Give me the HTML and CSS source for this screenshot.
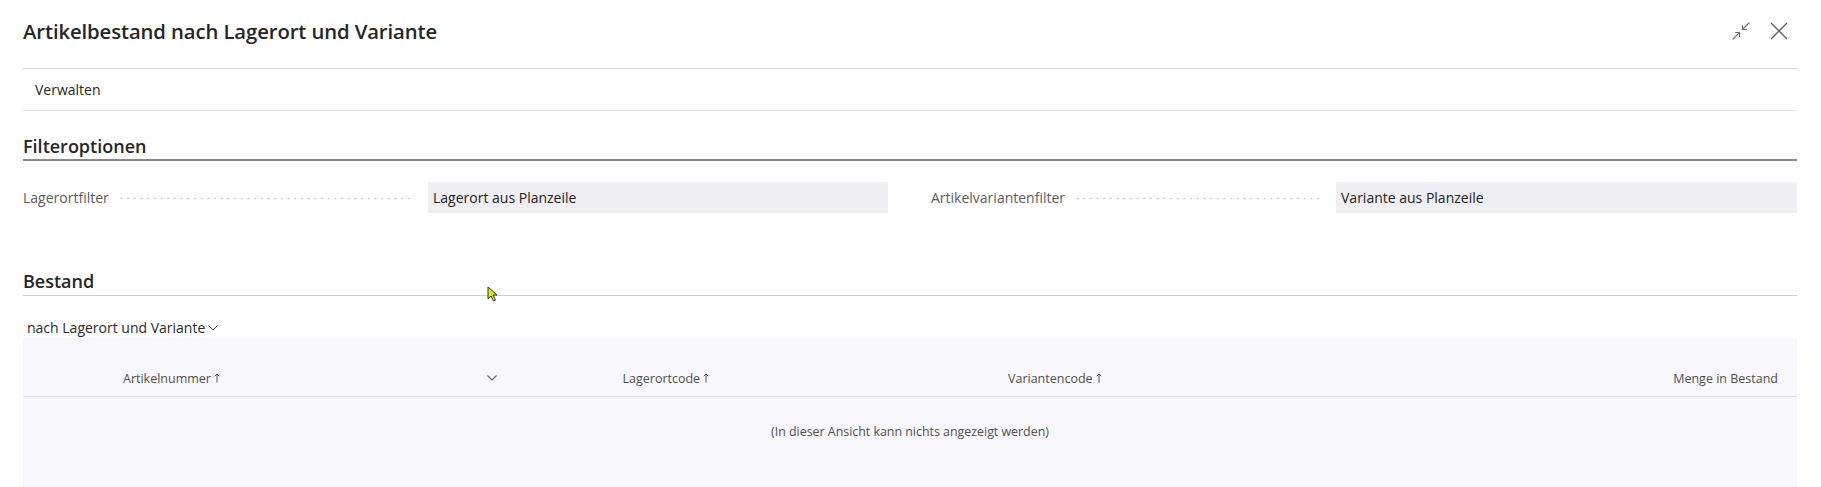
FILE: index.html
```html
<!DOCTYPE html>
<html lang="de">
<head>
<meta charset="utf-8">
<title>Artikelbestand nach Lagerort und Variante</title>
<link rel="stylesheet" href="styles.css">
</head>
<body>
<div class="page">
  <header class="header">
    <h1 class="title">Artikelbestand nach Lagerort und Variante</h1>
    <div class="window-actions">
      <button class="icon-btn" aria-label="Verkleinern">
        <svg width="18" height="18" viewBox="0 0 18 18" fill="none" stroke="#6b6b6b" stroke-width="1.1" stroke-linecap="round">
          <path d="M17 1 L10.5 7.5"/>
          <path d="M10.5 3.5 V7.5 H14.5"/>
          <path d="M1 17 L7.5 10.5"/>
          <path d="M3.5 10.5 H7.5 V14.5"/>
        </svg>
      </button>
      <button class="icon-btn" aria-label="Schließen">
        <svg width="18" height="18" viewBox="0 0 18 18" fill="none" stroke="#5f5f5f" stroke-width="1.3" stroke-linecap="round">
          <path d="M1.5 1.5 L16.5 16.5"/>
          <path d="M16.5 1.5 L1.5 16.5"/>
        </svg>
      </button>
    </div>
  </header>

  <nav class="actionbar">
    <span class="action">Verwalten</span>
  </nav>

  <section class="group">
    <h2 class="group-title group-title-strong">Filteroptionen</h2>
    <div class="filters">
      <div class="field">
        <div class="field-label"><span class="label-text">Lagerortfilter</span><span class="leader"></span></div>
        <div class="field-value">Lagerort aus Planzeile</div>
      </div>
      <div class="field">
        <div class="field-label"><span class="label-text">Artikelvariantenfilter</span><span class="leader"></span></div>
        <div class="field-value">Variante aus Planzeile</div>
      </div>
    </div>
  </section>

  <section class="group group-stock">
    <h2 class="group-title group-title-light">Bestand</h2>
    <div class="view-select">nach Lagerort und Variante
      <svg class="chev-small" width="10" height="6" viewBox="0 0 10 6" fill="none" stroke="#505050" stroke-width="1"><path d="M0.5 0.5 L5 5 L9.5 0.5"/></svg>
    </div>
    <div class="table">
      <div class="thead">
        <div class="th-spacer"></div>
        <div class="th th-art"><span>Artikelnummer <svg class="sort" width="6" height="10" viewBox="0 0 6 10" fill="none" stroke="#505050" stroke-width="1"><path d="M3 9.5 V1"/><path d="M0.8 3.2 L3 1 L5.2 3.2"/></svg></span>
          <svg class="col-menu" width="10" height="6" viewBox="0 0 10 6" fill="none" stroke="#606060" stroke-width="1.1"><path d="M0.5 0.5 L5 5 L9.5 0.5"/></svg>
        </div>
        <div class="th-spacer"></div>
        <div class="th">Lagerortcode <svg class="sort" width="6" height="10" viewBox="0 0 6 10" fill="none" stroke="#505050" stroke-width="1"><path d="M3 9.5 V1"/><path d="M0.8 3.2 L3 1 L5.2 3.2"/></svg></div>
        <div class="th">Variantencode <svg class="sort" width="6" height="10" viewBox="0 0 6 10" fill="none" stroke="#505050" stroke-width="1"><path d="M3 9.5 V1"/><path d="M0.8 3.2 L3 1 L5.2 3.2"/></svg></div>
        <div class="th th-right">Menge in Bestand</div>
      </div>
      <div class="tbody">
        <div class="empty">(In dieser Ansicht kann nichts angezeigt werden)</div>
      </div>
    </div>
  </section>

  <svg class="cursor" width="12" height="16" viewBox="0 0 12 16"><path d="M1 1 L1 13 L4 10 L6.5 15 L8.5 14 L6 9 L10 9 Z" fill="#d7e81a" stroke="#222" stroke-width="0.9" stroke-linejoin="round"/></svg>
</div>
</body>
</html>
```

FILE: styles.css
```css
* { box-sizing: border-box; }
html, body { margin: 0; padding: 0; background: #ffffff; }
body {
  font-family: "Open Sans", "Noto Sans", "Liberation Sans", sans-serif;
  color: #212121;
  height: 487px;
  overflow: hidden;
}
.page {
  position: relative;
  padding: 0 24px 0 23px;
}
.header {
  display: flex;
  align-items: center;
  justify-content: space-between;
  height: 69px;
  padding-bottom: 7px;
  border-bottom: 1px solid #d6d6d6;
}
.title {
  margin: 0;
  font-size: 20.3px;
  font-weight: 600;
  letter-spacing: -0.1px;
  color: #262626;
}
.window-actions {
  display: flex;
  gap: 20px;
  margin-right: 9px;
  margin-top: 1px;
}
.icon-btn {
  border: 0;
  background: none;
  padding: 0;
  width: 18px;
  height: 18px;
  display: flex;
}
.actionbar {
  height: 42px;
  display: flex;
  align-items: center;
  padding-left: 12px;
  border-bottom: 1px solid #e1e1e1;
}
.action {
  font-size: 14px;
  color: #262626;
}
.group-title {
  margin: 0;
  font-size: 18px;
  font-weight: 600;
  line-height: 26px;
  color: #262626;
}
.group-title-strong {
  margin-top: 22px;
  padding-bottom: 0;
  border-bottom: 2px solid #8a8a8a;
}
.filters {
  display: grid;
  grid-template-columns: 865px 1fr;
  gap: 43px;
  margin-top: 21px;
}
.field {
  display: grid;
  grid-template-columns: 405px 1fr;
  align-items: center;
}
.field-label {
  display: flex;
  align-items: center;
  padding-right: 13px;
  font-size: 14px;
  color: #5c5c5c;
}
.leader {
  flex: 1;
  height: 3px;
  margin-left: 9px;
  margin-top: 2px;
  background-image: radial-gradient(circle, #c4c4c4 0.8px, transparent 1.1px);
  background-size: 6.7px 3px;
  background-repeat: repeat-x;
}
.field-value {
  height: 31px;
  line-height: 31px;
  padding-left: 5px;
  background: #efeef2;
  font-size: 14px;
  color: #222;
}
.group-stock {
  margin-top: 55px;
}
.group-title-light {
  padding-bottom: 1px;
  border-bottom: 1.5px solid #cfcfcf;
}
.view-select {
  display: flex;
  align-items: center;
  gap: 3px;
  height: 42px;
  padding-left: 4px;
  padding-top: 20px;
  font-size: 14px;
  color: #2a2a2a;
}
.chev-small { margin-top: 2px; }
.table {
  background: #f8f7fb;
  height: 160px;
}
.thead {
  display: grid;
  grid-template-columns: 100px 374px 125.5px 385.5px 1fr auto;
  align-items: end;
  height: 59px;
  padding-bottom: 9px;
  padding-right: 19px;
  border-bottom: 1px solid #dcdbe0;
  font-size: 12.5px;
  color: #505050;
}
.th { display: flex; align-items: center; gap: 3px; white-space: nowrap; }
.th span { display: flex; align-items: center; gap: 3px; }
.th-art { justify-content: space-between; }
.col-menu { margin-bottom: 1px; }
.th-right { justify-content: flex-end; }
.sort { margin-top: -2px; }
.tbody {
  display: flex;
  justify-content: center;
  padding-top: 26px;
}
.empty {
  font-size: 12.4px;
  color: #505050;
}
.cursor {
  position: absolute;
  left: 487px;
  top: 286px;
}
```
